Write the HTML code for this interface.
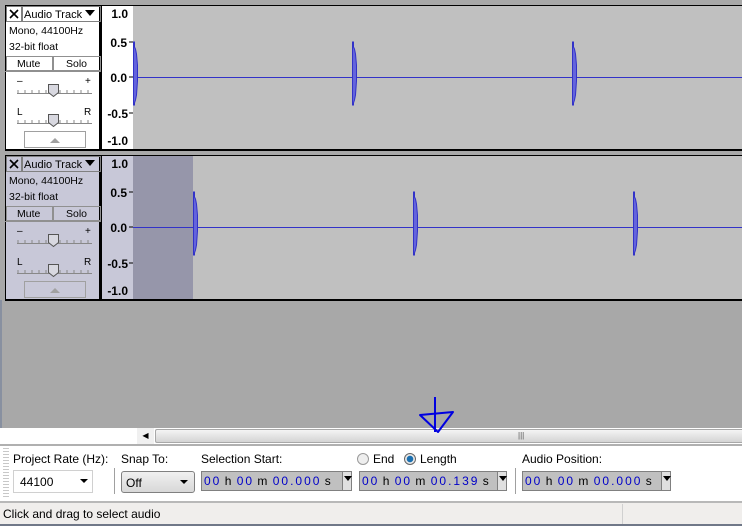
<html><head><style>
*{margin:0;padding:0;box-sizing:border-box}
body{width:742px;height:526px;overflow:hidden;background:#a8a8a8;font-family:"Liberation Sans",sans-serif;font-size:12px;position:relative}
.a{position:absolute}
.panel{position:absolute;left:5px;width:96px;border:1px solid #000;border-right:2px solid #000;border-bottom:2px solid #000}
.t{font-size:11px;color:#000}
.lcd{position:absolute;height:20px;background:#c0c0c0;border:1px solid #808080;border-right:none;font-size:12px;color:#0000c8;letter-spacing:2px;word-spacing:-2px;line-height:18px;padding-left:2px;white-space:nowrap;overflow:hidden}
.lcd b{font-weight:normal;color:#000}
.dd{position:absolute;width:10px;height:20px;background:#e0e0e0;border:1px solid #808080}
.dd:after{content:"";position:absolute;left:1px;top:4px;border:4px solid transparent;border-top:5px solid #000}
</style></head><body>
<div class="a" style="left:0;top:300px;width:2px;height:128px;background:#8890a0"></div>

<div class="a" style="left:5px;top:5px;width:737px;height:146px;background:#c0c0c0;border-top:1px solid #000;border-bottom:2px solid #000"></div>
<div class="panel" style="top:5px;height:146px;background:#fff"></div>
<div class="a" style="left:5px;top:155px;width:737px;height:146px;background:#c0c0c0;border-top:1px solid #000;border-bottom:2px solid #000"></div>
<div class="a" style="left:133px;top:156px;width:60px;height:143px;background:#9696aa"></div>
<div class="panel" style="top:155px;height:146px;background:#c8c8d8"></div>

<svg class="a" style="left:0;top:0" width="742" height="310">
<defs><g id="sp"><path d="M0 -35v63h1v-2l1-3l1-5l1-14v-16l-1-11l-1-5l-1-2v-5z" fill="#6464dc" stroke="#3232c8" stroke-width="1"/></g></defs>
<g font-family="Liberation Sans" font-size="11">
<g id="p1">
<rect x="6.5" y="6.5" width="15" height="15" fill="none" stroke="#808080"/>
<path d="M10 10l8 8M18 10l-8 8" stroke="#000" stroke-width="1.6"/>
<rect x="22.5" y="6.5" width="78" height="15" fill="none" stroke="#808080"/>
<text x="24" y="18">Audio Track</text>
<path d="M85 10h10l-5 6z" fill="#000"/>
<text x="9" y="34" font-size="10.5">Mono, 44100Hz</text>
<text x="9" y="50" font-size="10.5">32-bit float</text>
<rect x="6.5" y="56.5" width="46" height="14" fill="none" stroke="#909090"/>
<rect x="53.5" y="56.5" width="47" height="14" fill="none" stroke="#909090"/>
<text x="17" y="67" font-size="10.5">Mute</text><text x="66" y="67" font-size="10.5">Solo</text>
<line x1="5" y1="71.5" x2="101" y2="71.5" stroke="#909090"/>
<text x="17" y="84" font-size="10">–</text><text x="85" y="84" font-size="10">+</text>
<line x1="17" y1="93.5" x2="92" y2="93.5" stroke="#888"/>
<path d="M18 90v3M25 90v3M32 90v3M39 90v3M46 90v3M60 90v3M67 90v3M74 90v3M81 90v3M88 90v3" stroke="#888"/>
<path d="M48.5 84.5h10v8l-5 4l-5-4z" fill="#d8d8e0" stroke="#555"/>
<text x="17" y="115" font-size="10">L</text><text x="84" y="115" font-size="10">R</text>
<line x1="17" y1="123.5" x2="92" y2="123.5" stroke="#888"/>
<path d="M18 120v3M25 120v3M32 120v3M39 120v3M46 120v3M60 120v3M67 120v3M74 120v3M81 120v3M88 120v3" stroke="#888"/>
<path d="M48.5 114.5h10v8l-5 4l-5-4z" fill="#d8d8e0" stroke="#555"/>
<rect x="24.5" y="131.5" width="61" height="16" fill="none" stroke="#a0a0a0"/>
<path d="M50 143h10l-5-5z" fill="#a0a0a0"/>
</g>
<use href="#p1" y="150"/>
<rect x="102" y="6" width="31" height="143" fill="#fff"/>
<rect x="102" y="156" width="31" height="143" fill="#c8c8d8"/>
<line x1="101.5" y1="5" x2="101.5" y2="150" stroke="#000"/>
<line x1="101.5" y1="155" x2="101.5" y2="300" stroke="#000"/>
<g font-weight="bold" font-size="12" text-anchor="end">
<text x="128" y="18">1.0</text><text x="127" y="47">0.5</text><text x="127" y="82">0.0</text><text x="128" y="118">-0.5</text><text x="128" y="145">-1.0</text>
<text x="128" y="168">1.0</text><text x="127" y="197">0.5</text><text x="127" y="232">0.0</text><text x="128" y="268">-0.5</text><text x="128" y="295">-1.0</text>
</g>
<g stroke="#000"><path d="M129 42h4M129 77h4M129 113h4M129 192h4M129 227h4M129 263h4"/></g>
<line x1="133" y1="77.5" x2="742" y2="77.5" stroke="#3232c8"/>
<line x1="133" y1="227.5" x2="742" y2="227.5" stroke="#3232c8"/>
<use href="#sp" x="133.5" y="77"/><use href="#sp" x="352.5" y="77"/><use href="#sp" x="572.5" y="77"/>
<use href="#sp" x="193.5" y="227"/><use href="#sp" x="413.5" y="227"/><use href="#sp" x="633.5" y="227"/>
</g></svg>

<div class="a" style="left:0;top:428px;width:742px;height:17px;background:#fff"></div>
<div class="a" style="left:137px;top:428px;width:17px;height:16px;background:#f0f0f0;font-size:8px;line-height:16px;text-align:center">◀</div>
<div class="a" style="left:155px;top:429px;width:587px;height:14px;background:linear-gradient(#f4f4f4,#d4d4d4);border:1px solid #a8a8a8;border-right:none;border-radius:2px 0 0 2px"></div>
<div class="a" style="left:518px;top:429px;font-size:8px;line-height:14px;color:#555">|||</div>
<div class="a" style="left:0;top:444px;width:742px;height:2px;background:#b0b0b0"></div>

<svg class="a" style="left:410px;top:395px;z-index:5" width="50" height="42"><path d="M25 2v35M10 20L43 17L28 37Z" fill="none" stroke="#0000e0" stroke-width="2" stroke-linejoin="round"/></svg>

<div class="a" style="left:0;top:446px;width:742px;height:55px;background:#fff"></div>
<div class="a" style="left:3px;top:448px;width:6px;height:50px;background:repeating-linear-gradient(#c8c8c8 0 1px,#fff 1px 3px)"></div>
<div class="a t" style="left:13px;top:452px;font-size:12px">Project Rate (Hz):</div>
<div class="a" style="left:13px;top:470px;width:80px;height:23px;border:1px solid #d0d0d0;background:#fff;font-size:12px;padding:4px 6px">44100</div>
<div class="a" style="left:80px;top:479px;border:4px solid transparent;border-top:4px solid #000"></div>
<div class="a" style="left:114px;top:468px;width:1px;height:26px;background:#a0a0a0"></div>
<div class="a t" style="left:121px;top:452px;font-size:12px">Snap To:</div>
<div class="a" style="left:121px;top:471px;width:74px;height:22px;border:1px solid #808080;border-radius:3px;background:linear-gradient(#f0f0f0,#d8d8d8);font-size:12px;padding:4px 4px">Off</div>
<div class="a" style="left:180px;top:480px;border:4px solid transparent;border-top:4px solid #000"></div>
<div class="a t" style="left:201px;top:452px;font-size:12px">Selection Start:</div>
<div class="lcd" style="left:201px;top:471px;width:142px">00 <b>h</b> 00 <b>m</b> 00.000 <b>s</b></div><div class="dd" style="left:342px;top:471px"></div>
<div class="a" style="left:357px;top:453px;width:12px;height:12px;border-radius:50%;border:1px solid #999;background:#eee"></div>
<div class="a t" style="left:373px;top:452px;font-size:12px">End</div>
<div class="a" style="left:404px;top:453px;width:12px;height:12px;border-radius:50%;border:1px solid #666;background:radial-gradient(#1a6fb0 0 3px,#e8e8e8 3.5px)"></div>
<div class="a t" style="left:420px;top:452px;font-size:12px">Length</div>
<div class="lcd" style="left:359px;top:471px;width:139px">00 <b>h</b> 00 <b>m</b> 00.139 <b>s</b></div><div class="dd" style="left:497px;top:471px"></div>
<div class="a" style="left:515px;top:468px;width:1px;height:26px;background:#a0a0a0"></div>
<div class="a t" style="left:522px;top:452px;font-size:12px">Audio Position:</div>
<div class="lcd" style="left:522px;top:471px;width:140px">00 <b>h</b> 00 <b>m</b> 00.000 <b>s</b></div><div class="dd" style="left:661px;top:471px"></div>
<div class="a" style="left:0;top:501px;width:742px;height:2px;background:#b8b8b8"></div>

<div class="a" style="left:0;top:503px;width:742px;height:21px;background:#f0eeec;font-size:12px;padding:4px 3px">Click and drag to select audio</div>
<div class="a" style="left:622px;top:504px;width:1px;height:20px;background:#d0d0d0"></div>
<div class="a" style="left:0;top:524px;width:742px;height:2px;background:#707888"></div>
</body></html>
